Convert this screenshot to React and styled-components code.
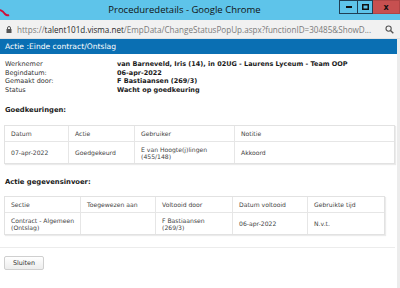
import styled, { createGlobalStyle } from "styled-components";

const Global = createGlobalStyle`
  html, body { margin: 0; padding: 0; background: #ffffff; }
  body { width: 400px; height: 288px; overflow: hidden; }
`;

const Window = styled.div`
  width: 400px;
  height: 288px;
  display: flex;
  flex-direction: column;
  background: #ffffff;
`;

const TitleBar = styled.div`
  height: 20px;
  background: #5ec4ea;
  display: flex;
  align-items: flex-start;
  position: relative;
  font-family: "Open Sans", "Noto Sans", sans-serif;
`;

const AppIcon = styled.div`
  width: 20px;
  height: 20px;
  display: flex;
  align-items: center;
`;

const Title = styled.div`
  flex: 1;
  text-align: center;
  font-size: 9.5px;
  line-height: 20px;
  color: #111;
  padding-left: 10px;
`;

const Controls = styled.div`
  display: flex;
  height: 14px;
`;

const CtrlButton = styled.div`
  width: ${(p) => p.w}px;
  height: 14px;
  box-sizing: border-box;
  background: ${(p) => (p.close ? "#c75050" : "transparent")};
  border: 1px solid ${(p) => (p.close ? "#b04545" : "#1f3f55")};
  border-left: ${(p) => (p.first ? "1px solid #1f3f55" : "none")};
  display: flex;
  align-items: center;
  justify-content: center;
  color: #111;
  font-size: 8px;
  font-weight: bold;
  font-family: "DejaVu Sans", sans-serif;
`;

const AddressBar = styled.div`
  height: 18px;
  background: #f1f1f1;
  border-bottom: 1px solid #e2e2e2;
  display: flex;
  align-items: center;
  padding: 0 6px;
  gap: 5px;
  font-family: "Open Sans", "Noto Sans", sans-serif;
  font-size: 8.1px;
  white-space: nowrap;
`;

const Url = styled.span`
  flex: 1;
  color: #7a7a7a;
  overflow: hidden;
  b {
    font-weight: normal;
    color: #2a2a2a;
  }
`;

const Body = styled.div`
  flex: 1;
  display: flex;
  flex-direction: column;
  border-right: 3px solid #ececec;
  font-family: "DejaVu Sans", Verdana, sans-serif;
`;

const DialogHeader = styled.div`
  height: 15px;
  background: #0a6fb3;
  color: #ffffff;
  font-size: 7.6px;
  line-height: 15px;
  padding-left: 5px;
`;

const Content = styled.div`
  padding: 6px 3px 0 4px;
  display: flex;
  flex-direction: column;
`;

const InfoGrid = styled.div`
  display: grid;
  grid-template-columns: 112px 1fr;
  font-size: 6.5px;
  line-height: 8.5px;
  color: #333;
  padding-left: 1px;
  white-space: nowrap;
`;

const Value = styled.div`
  font-weight: bold;
  color: #1a1a1a;
`;

const SectionTitle = styled.div`
  font-size: 6.8px;
  font-weight: bold;
  color: #1a1a1a;
  padding-left: 1px;
  margin: ${(p) => p.m};
`;

const Table = styled.div`
  display: grid;
  grid-template-columns: ${(p) => p.cols};
  width: ${(p) => p.w}px;
  border: 1px solid #e2e2e2;
  box-shadow: 1px 1px 1px rgba(0, 0, 0, 0.08);
  font-size: 6.1px;
  line-height: 7px;
  color: #444;
`;

const Cell = styled.div`
  padding: 0 4px 0 6px;
  height: ${(p) => (p.head ? 15 : 22)}px;
  display: flex;
  align-items: center;
  white-space: nowrap;
  border-left: ${(p) => (p.first ? "none" : "1px solid #e6e6e6")};
  border-top: ${(p) => (p.head ? "none" : "1px solid #e6e6e6")};
  box-sizing: border-box;
`;

const Separator = styled.div`
  height: 1px;
  background: #ececec;
  margin: 12px 0 2px -4px;
  width: 395px;
`;

const Button = styled.button`
  width: 40px;
  height: 14px;
  padding: 0;
  border: 1px solid #cfcfcf;
  border-radius: 2px;
  background: linear-gradient(#ffffff, #ededed);
  font-family: "DejaVu Sans", Verdana, sans-serif;
  font-size: 6.4px;
  color: #333;
`;

function TableView({ cols, w, head, rows }) {
  return (
    <Table cols={cols} w={w}>
      {head.map((h, i) => (
        <Cell key={h} head first={i === 0}>
          {h}
        </Cell>
      ))}
      {rows.map((r, ri) =>
        r.map((c, i) => (
          <Cell key={ri + "-" + i} first={i === 0}>
            <div>
              {c.split("\n").map((line, li) => (
                <div key={li}>{line}</div>
              ))}
            </div>
          </Cell>
        ))
      )}
    </Table>
  );
}

export default function App() {
  return (
    <Window>
      <Global />
      <TitleBar>
        <AppIcon>
          <svg width="10" height="8" viewBox="0 0 10 8" style={{ marginLeft: 0, marginTop: 6 }}>
            <path d="M0 1 Q3 2 5 5 Q7 7 9 6" stroke="#d0103a" strokeWidth="2" fill="none" />
          </svg>
        </AppIcon>
        <Title>Proceduredetails - Google Chrome</Title>
        <Controls>
          <CtrlButton w={19} first>
            <svg width="6" height="2"><rect width="6" height="2" fill="#111" /></svg>
          </CtrlButton>
          <CtrlButton w={15}>
            <svg width="7" height="6"><rect x="0.75" y="0.75" width="5.5" height="4.5" fill="none" stroke="#111" strokeWidth="1.5" /></svg>
          </CtrlButton>
          <CtrlButton w={27} close>
            x
          </CtrlButton>
        </Controls>
      </TitleBar>
      <AddressBar>
        <svg width="6" height="7" viewBox="0 0 6 7">
          <path d="M1.5 3V2a1.5 1.5 0 0 1 3 0v1" stroke="#555" fill="none" />
          <rect x="0.5" y="3" width="5" height="4" fill="#555" />
        </svg>
        <Url>
          https://<b>talent101d.visma.net</b>/EmpData/ChangeStatusPopUp.aspx?functionID=30485&amp;ShowD...
        </Url>
        <svg width="9" height="9" viewBox="0 0 9 9">
          <circle cx="3.6" cy="3.6" r="2.6" stroke="#555" strokeWidth="1.1" fill="none" />
          <path d="M5.5 5.5L8.3 8.3" stroke="#555" strokeWidth="1.4" />
        </svg>
      </AddressBar>
      <Body>
        <DialogHeader>Actie :Einde contract/Ontslag</DialogHeader>
        <Content>
          <InfoGrid>
            <div>Werknemer</div>
            <Value>van Barneveld, Iris (14), in 02UG - Laurens Lyceum - Team OOP</Value>
            <div>Begindatum:</div>
            <Value>06-apr-2022</Value>
            <div>Gemaakt door:</div>
            <Value>F Bastiaansen (269/3)</Value>
            <div>Status</div>
            <Value>Wacht op goedkeuring</Value>
          </InfoGrid>
          <SectionTitle m="12px 0 11px">Goedkeuringen:</SectionTitle>
          <TableView
            cols="63px 66px 100px 1fr"
            w={389}
            head={["Datum", "Actie", "Gebruiker", "Notitie"]}
            rows={[["07-apr-2022", "Goedgekeurd", "E van Hoogte(j)lingen\n(455/148)", "Akkoord"]]}
          />
          <SectionTitle m="14px 0 10px">Actie gegevensinvoer:</SectionTitle>
          <TableView
            cols="75px 75px 77px 75px 1fr"
            w={379}
            head={["Sectie", "Toegewezen aan", "Voltooid door", "Datum voltooid", "Gebruikte tijd"]}
            rows={[["Contract - Algemeen\n(Ontslag)", "", "F Bastiaansen\n(269/3)", "06-apr-2022", "N.v.t."]]}
          />
          <Separator />
          <div>
            <Button>Sluiten</Button>
          </div>
        </Content>
      </Body>
    </Window>
  );
}
